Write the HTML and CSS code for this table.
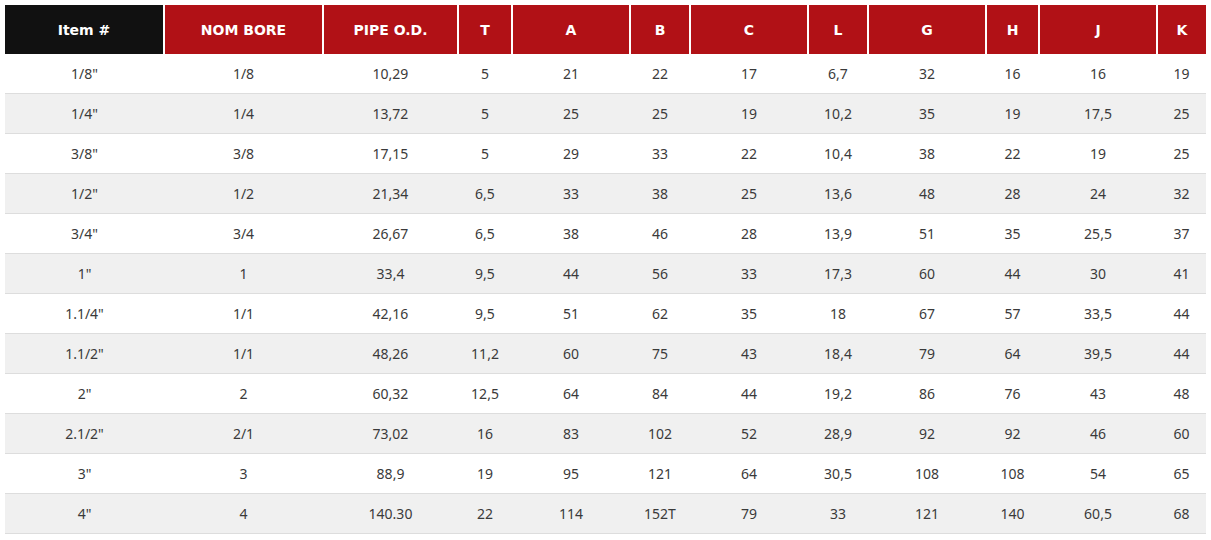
FILE: index.html
```html
<!DOCTYPE html>
<html>
<head>
<meta charset="utf-8">
<link rel="stylesheet" href="styles.css">
</head>
<body>
<table class="spec">
  <colgroup>
    <col class="w159"><col class="w159"><col class="w135"><col class="w54"><col class="w118"><col class="w60"><col class="w118"><col class="w60"><col class="w118"><col class="w53"><col class="w118"><col class="w49">
  </colgroup>
  <thead>
    <tr>
      <th class="dark">Item #</th><th>NOM BORE</th><th>PIPE O.D.</th><th>T</th><th>A</th><th>B</th><th>C</th><th>L</th><th>G</th><th>H</th><th>J</th><th class="last">K</th>
    </tr>
  </thead>
  <tbody>
    <tr><td>1/8"</td><td>1/8</td><td>10,29</td><td>5</td><td>21</td><td>22</td><td>17</td><td>6,7</td><td>32</td><td>16</td><td>16</td><td>19</td></tr>
    <tr><td>1/4"</td><td>1/4</td><td>13,72</td><td>5</td><td>25</td><td>25</td><td>19</td><td>10,2</td><td>35</td><td>19</td><td>17,5</td><td>25</td></tr>
    <tr><td>3/8"</td><td>3/8</td><td>17,15</td><td>5</td><td>29</td><td>33</td><td>22</td><td>10,4</td><td>38</td><td>22</td><td>19</td><td>25</td></tr>
    <tr><td>1/2"</td><td>1/2</td><td>21,34</td><td>6,5</td><td>33</td><td>38</td><td>25</td><td>13,6</td><td>48</td><td>28</td><td>24</td><td>32</td></tr>
    <tr><td>3/4"</td><td>3/4</td><td>26,67</td><td>6,5</td><td>38</td><td>46</td><td>28</td><td>13,9</td><td>51</td><td>35</td><td>25,5</td><td>37</td></tr>
    <tr><td>1"</td><td>1</td><td>33,4</td><td>9,5</td><td>44</td><td>56</td><td>33</td><td>17,3</td><td>60</td><td>44</td><td>30</td><td>41</td></tr>
    <tr><td>1.1/4"</td><td>1/1</td><td>42,16</td><td>9,5</td><td>51</td><td>62</td><td>35</td><td>18</td><td>67</td><td>57</td><td>33,5</td><td>44</td></tr>
    <tr><td>1.1/2"</td><td>1/1</td><td>48,26</td><td>11,2</td><td>60</td><td>75</td><td>43</td><td>18,4</td><td>79</td><td>64</td><td>39,5</td><td>44</td></tr>
    <tr><td>2"</td><td>2</td><td>60,32</td><td>12,5</td><td>64</td><td>84</td><td>44</td><td>19,2</td><td>86</td><td>76</td><td>43</td><td>48</td></tr>
    <tr><td>2.1/2"</td><td>2/1</td><td>73,02</td><td>16</td><td>83</td><td>102</td><td>52</td><td>28,9</td><td>92</td><td>92</td><td>46</td><td>60</td></tr>
    <tr><td>3"</td><td>3</td><td>88,9</td><td>19</td><td>95</td><td>121</td><td>64</td><td>30,5</td><td>108</td><td>108</td><td>54</td><td>65</td></tr>
    <tr><td>4"</td><td>4</td><td>140.30</td><td>22</td><td>114</td><td>152T</td><td>79</td><td>33</td><td>121</td><td>140</td><td>60,5</td><td>68</td></tr>
  </tbody>
</table>
</body>
</html>
```
FILE: styles.css
```css
html, body {
  margin: 0;
  padding: 0;
  background: #ffffff;
}
body {
  padding: 5px;
  font-family: "Noto Sans", "DejaVu Sans", sans-serif;
}
.spec {
  border-collapse: collapse;
  table-layout: fixed;
  width: 1201px;
}
.w159 { width: 159px; }
.w135 { width: 135px; }
.w54 { width: 54px; }
.w118 { width: 118px; }
.w60 { width: 60px; }
.w53 { width: 53px; }
.w49 { width: 49px; }
.spec th {
  height: 49px;
  padding: 0;
  background: #b11116;
  color: #ffffff;
  font-family: "DejaVu Sans", "Noto Sans", sans-serif;
  font-weight: 700;
  font-size: 14px;
  text-align: center;
  border-right: 2px solid #ffffff;
  box-sizing: border-box;
}
.spec th.dark {
  background: #111111;
}
.spec th.last {
  border-right: none;
}
.spec td {
  height: 39px;
  padding: 0;
  text-align: center;
  font-size: 14px;
  color: #3a3a3a;
  border-bottom: 1px solid #dddddd;
}
.spec tbody tr:nth-child(even) td {
  background: #f0f0f0;
}
```
